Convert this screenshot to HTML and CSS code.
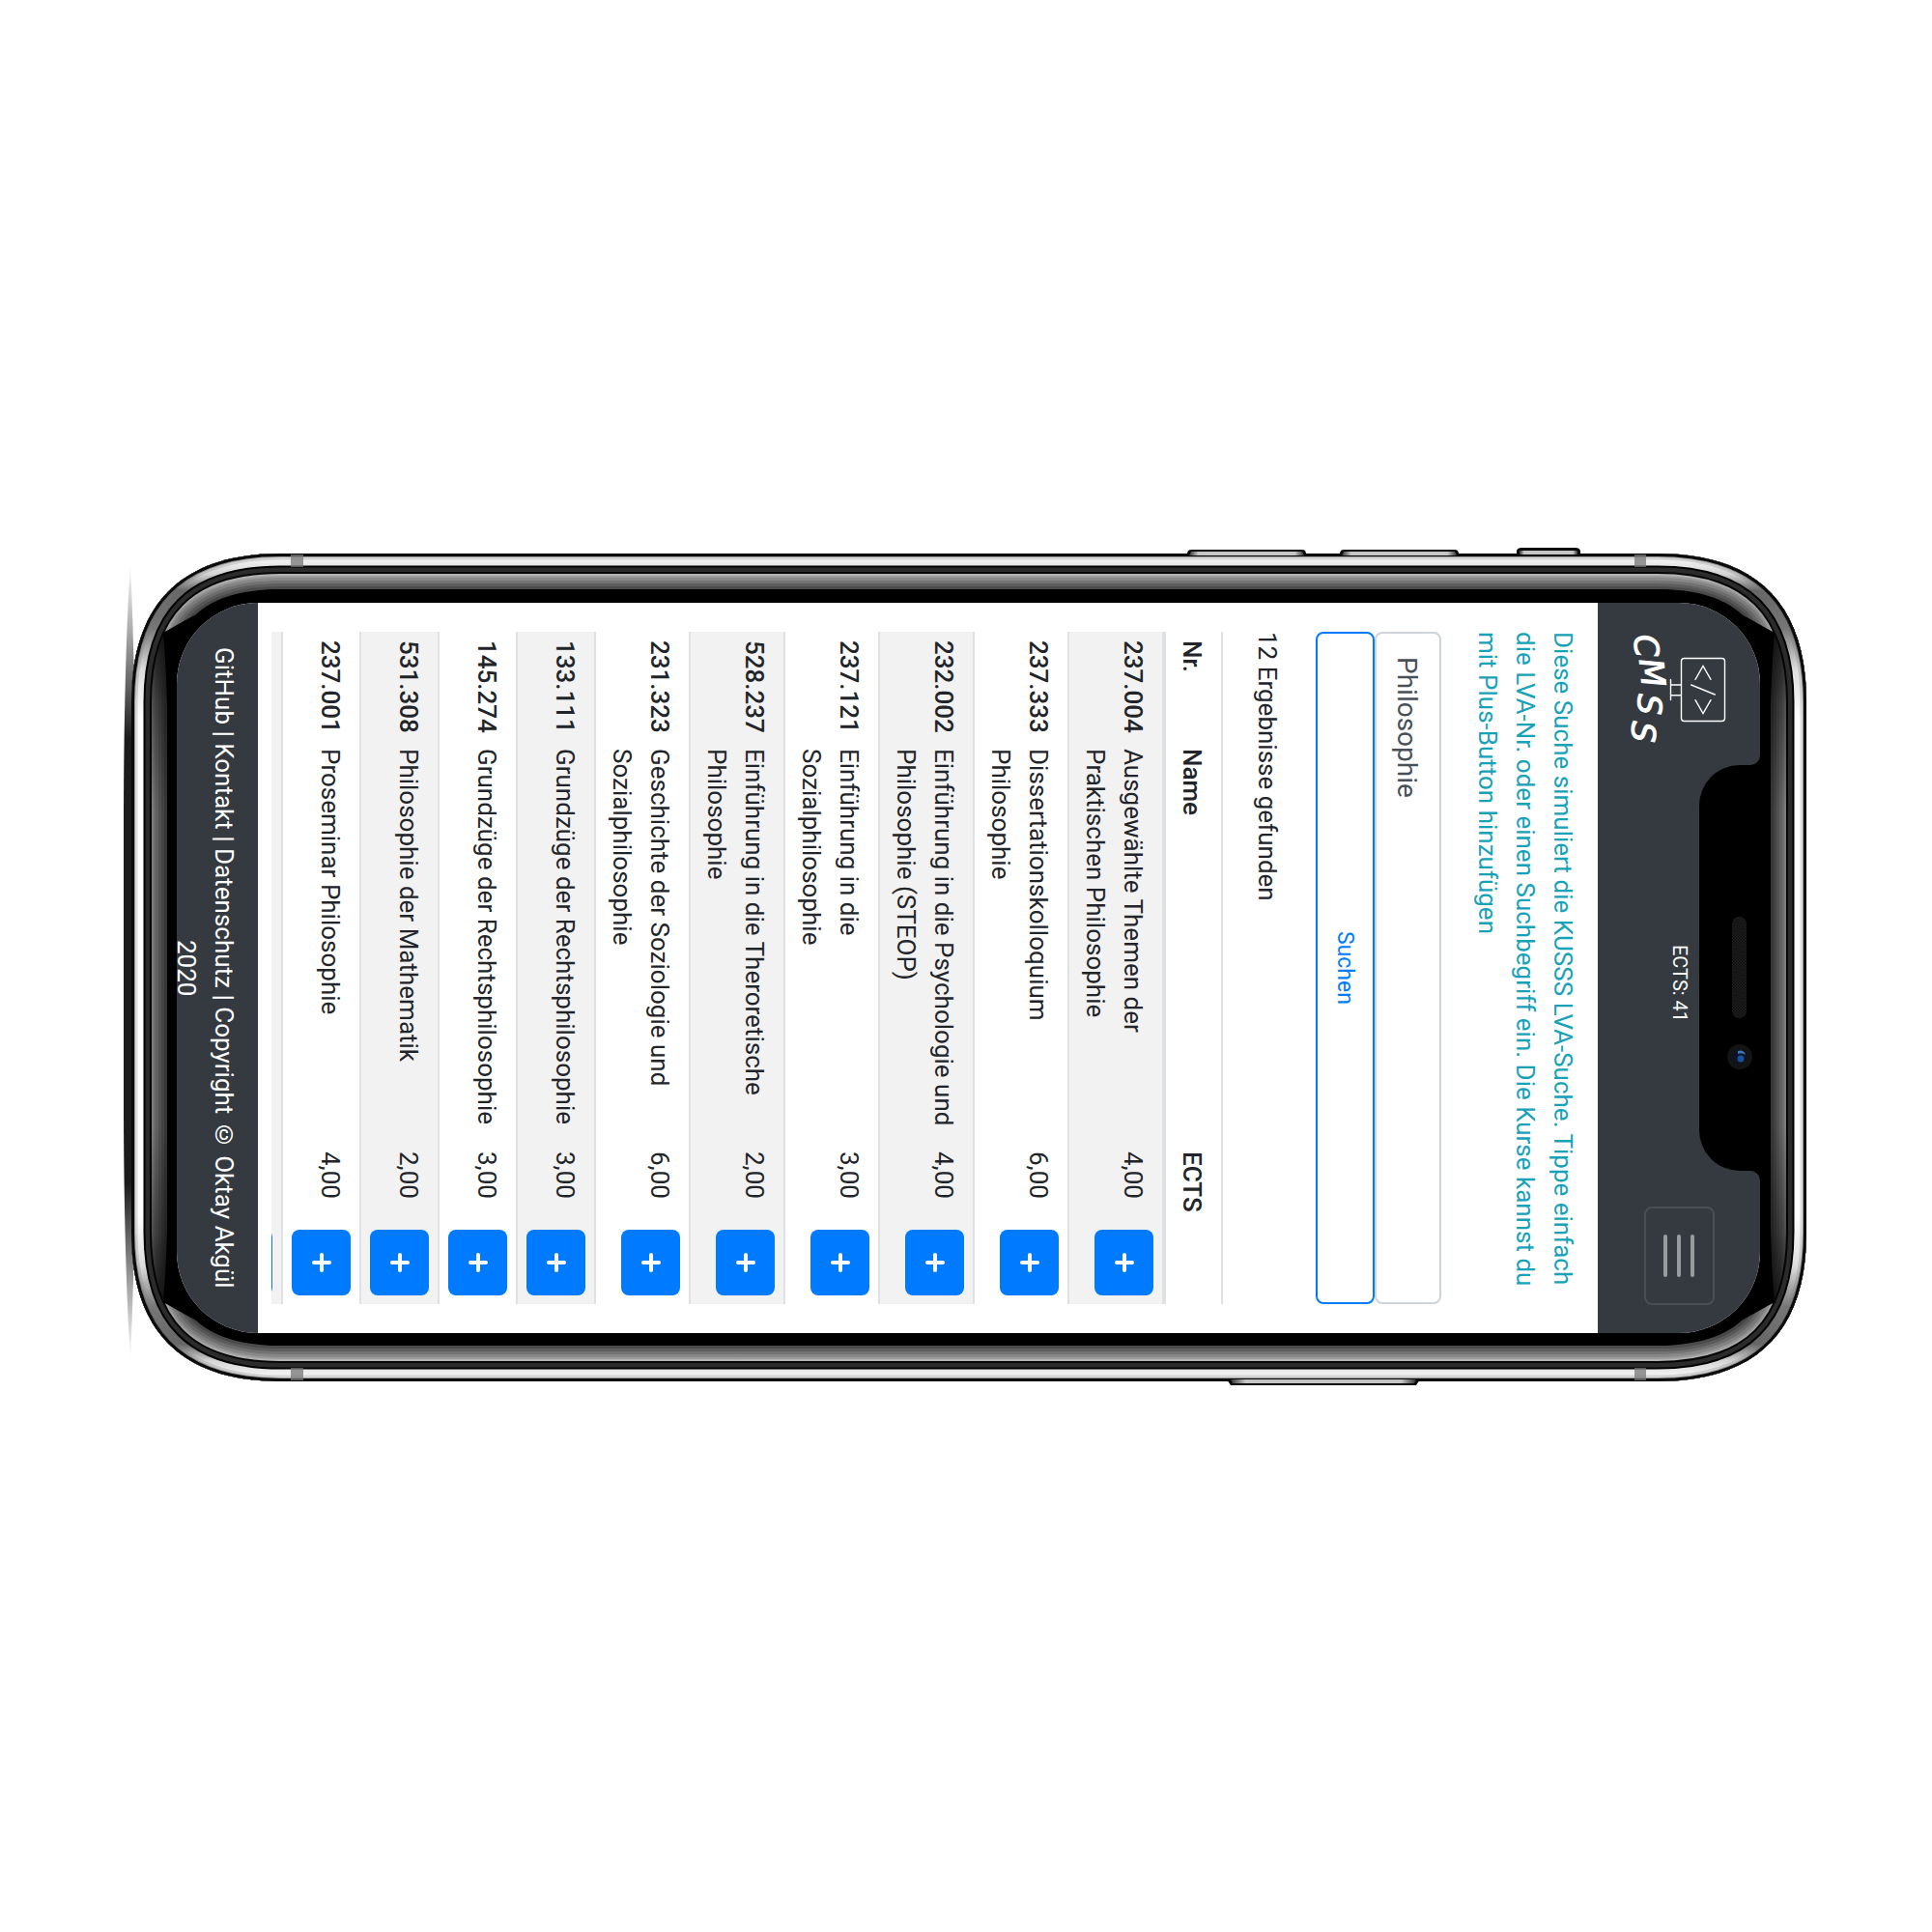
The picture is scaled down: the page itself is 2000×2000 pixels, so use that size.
FILE: index.html
```html
<!DOCTYPE html>
<html lang="de">
<head>
<meta charset="utf-8">
<meta name="viewport" content="width=device-width, initial-scale=1">
<title>CMSS – LVA-Suche</title>
<link rel="stylesheet" href="styles.css">
</head>
<body>
<div class="stage">
  <div class="device">
    <svg class="device-art" viewBox="128 566 1742 868" aria-hidden="true">
      <defs>
        <path id="body" d="M290 573H1716C1818 573 1870 625 1870 727V1276C1870 1378 1818 1430 1716 1430H290C188 1430 136 1378 136 1276V727C136 625 188 573 290 573Z"/>
        <clipPath id="bodyClip"><use href="#body"/></clipPath>
        <linearGradient id="bevel" gradientUnits="userSpaceOnUse" x1="0" y1="594" x2="0" y2="1409">
          <stop offset="0" stop-color="#c8c8c8"/>
          <stop offset=".05" stop-color="#aaa"/>
          <stop offset=".072" stop-color="#b8b8b8"/>
          <stop offset=".076" stop-color="#111"/>
          <stop offset=".16" stop-color="#555"/>
          <stop offset=".3" stop-color="#8a8a8a"/>
          <stop offset=".7" stop-color="#8a8a8a"/>
          <stop offset=".84" stop-color="#555"/>
          <stop offset=".924" stop-color="#111"/>
          <stop offset=".928" stop-color="#b8b8b8"/>
          <stop offset=".95" stop-color="#aaa"/>
          <stop offset="1" stop-color="#c8c8c8"/>
        </linearGradient>
        <linearGradient id="steel" gradientUnits="userSpaceOnUse" x1="0" y1="573" x2="0" y2="1430">
          <stop offset="0" stop-color="#fff"/>
          <stop offset=".025" stop-color="#d4d4d4"/>
          <stop offset=".045" stop-color="#666"/>
          <stop offset=".09" stop-color="#777"/>
          <stop offset=".14" stop-color="#ddd"/>
          <stop offset=".2" stop-color="#fff"/>
          <stop offset=".8" stop-color="#fff"/>
          <stop offset=".86" stop-color="#ddd"/>
          <stop offset=".91" stop-color="#777"/>
          <stop offset=".955" stop-color="#666"/>
          <stop offset=".975" stop-color="#d4d4d4"/>
          <stop offset="1" stop-color="#fff"/>
        </linearGradient>
        <linearGradient id="edge" x1="0" y1="0" x2="0" y2="1">
          <stop offset="0" stop-color="#222" stop-opacity="0"/>
          <stop offset=".1" stop-color="#222" stop-opacity=".45"/>
          <stop offset=".22" stop-color="#1c1c1c"/>
          <stop offset=".78" stop-color="#1c1c1c"/>
          <stop offset=".9" stop-color="#222" stop-opacity=".45"/>
          <stop offset="1" stop-color="#222" stop-opacity="0"/>
        </linearGradient>
        <linearGradient id="key" x1="0" y1="0" x2="1" y2="0">
          <stop offset="0" stop-color="#333"/>
          <stop offset=".08" stop-color="#c4c4c4"/>
          <stop offset=".92" stop-color="#c4c4c4"/>
          <stop offset="1" stop-color="#333"/>
        </linearGradient>
      </defs>
      <path d="M135 583C131 640 128 740 128 850V1140C128 1250 131 1350 135 1407C138 1340 140 1260 141 1140V850C140 730 138 650 135 583Z" fill="url(#edge)"/>
      <use href="#body" fill="#000"/>
      <g clip-path="url(#bodyClip)" fill="none">
        <g stroke="url(#bevel)">
          <use href="#body" stroke-width="74" stroke-opacity=".4"/>
          <use href="#body" stroke-width="68" stroke-opacity=".15"/>
          <use href="#body" stroke-width="62" stroke-opacity=".2"/>
          <use href="#body" stroke-width="56" stroke-opacity=".25"/>
          <use href="#body" stroke-width="50" stroke-opacity=".3"/>
          <use href="#body" stroke-width="46" stroke-opacity=".5"/>
        </g>
        <g fill="#000">
          <path d="M290 610C245 610 216 629 169 655Q172 690 173 730H290Z"/>
          <path d="M290 1393C245 1393 216 1374 169 1348Q172 1313 173 1273H290Z"/>
          <path d="M1716 610C1761 610 1790 629 1837 655Q1834 690 1833 730H1716Z"/>
          <path d="M1716 1393C1761 1393 1790 1374 1837 1348Q1834 1313 1833 1273H1716Z"/>
        </g>
        <use href="#body" stroke="#050505" stroke-width="42"/>
        <use href="#body" stroke="#2b2b2b" stroke-width="38"/>
        <use href="#body" stroke="#000" stroke-width="29"/>
        <use href="#body" stroke="url(#steel)" stroke-width="25"/>
        <use href="#body" stroke="#777" stroke-opacity=".25" stroke-width="13"/>
        <use href="#body" stroke="#555" stroke-opacity=".5" stroke-width="8"/>
        <use href="#body" stroke="#0a0a0a" stroke-width="6"/>
      </g>
      <g fill="#0a0a0a">
        <path d="M1228 575L1230 570Q1231 569 1234 569H1347Q1350 569 1351 570L1353 575Z"/>
        <path d="M1386 575L1388 570Q1389 569 1392 569H1505Q1508 569 1509 570L1511 575Z"/>
        <path d="M1570 575V570Q1571 567 1575 567H1631Q1635 567 1636 570V575Z"/>
        <path d="M1270 1428L1274 1434H1466L1470 1428Z"/>
      </g>
      <g fill="url(#key)">
        <path d="M1231 575L1233 571H1348L1350 575Z"/>
        <path d="M1389 575L1391 571H1506L1508 575Z"/>
        <path d="M1573 574V570H1633V574Z"/>
        <path d="M1274 1428L1276 1432H1464L1466 1428Z"/>
      </g>
      <path d="M301 574h13v13h-13zM1692 574h12v13h-12zM301 1416h13v13h-13zM1692 1416h12v13h-12z" fill="#777" fill-opacity=".75"/>
    </svg>

    <div class="screen">
      <header class="topbar">
        <a class="brand" href="#" aria-label="CMSS">
          <svg class="brand-logo" viewBox="1689 654 98 133">
            <g fill="none" stroke="#fff" stroke-width="1.4" stroke-linecap="round">
              <rect x="1740.500" y="681.500" width="45" height="65" rx="3"/>
              <path d="M1740 709H1729.500M1740 719.700H1729.500M1729.500 703.500V724.500"/>
              <path d="M1755 703.300L1763 689.500L1771 703.300M1750.700 709L1775.300 719M1755 724.700L1763 738.500L1771 724.700"/>
            </g>
            <g class="brand-name">
              <text transform="translate(1691 658) rotate(84)">C</text>
              <text transform="translate(1697 683) rotate(84)">M</text>
              <text transform="translate(1696 718) rotate(92)">S</text>
              <text transform="translate(1690 746) rotate(94)">S</text>
            </g>
          </svg>
        </a>
        <span class="credits">ECTS: 41</span>
        <button class="toggler" type="button" aria-label="Menü">
          <span class="bar"></span><span class="bar"></span><span class="bar"></span>
        </button>
      </header>

      <main class="content">
        <p class="intro">Diese Suche simuliert die KUSSS LVA-Suche. Tippe einfach die LVA-Nr. oder einen Suchbegriff ein. Die Kurse kannst du mit Plus-Button hinzufügen</p>
        <form class="search">
          <input class="search-field" type="text" aria-label="Suchbegriff" value="Philosophie">
          <button class="search-button" type="button">Suchen</button>
        </form>
        <p class="count">12 Ergebnisse gefunden</p>
        <table class="courses">
          <colgroup><col class="col-nr"><col class="col-name"><col class="col-ects"><col class="col-add"></colgroup>
          <thead>
            <tr><th scope="col">Nr.</th><th scope="col">Name</th><th scope="col">ECTS</th><th></th></tr>
          </thead>
          <tbody>
            <tr><th scope="row">237.004</th><td>Ausgewählte Themen der Praktischen Philosophie</td><td>4,00</td><td class="action"><button class="add" type="button" aria-label="Hinzufügen"><svg viewBox="0 0 22 22"><path d="M11 3v16M3 11h16"/></svg></button></td></tr>
            <tr><th scope="row">237.333</th><td>Dissertationskolloquium Philosophie</td><td>6,00</td><td class="action"><button class="add" type="button" aria-label="Hinzufügen"><svg viewBox="0 0 22 22"><path d="M11 3v16M3 11h16"/></svg></button></td></tr>
            <tr><th scope="row">232.002</th><td>Einführung in die Psychologie und Philosophie (STEOP)</td><td>4,00</td><td class="action"><button class="add" type="button" aria-label="Hinzufügen"><svg viewBox="0 0 22 22"><path d="M11 3v16M3 11h16"/></svg></button></td></tr>
            <tr><th scope="row">237.121</th><td>Einführung in die Sozialphilosophie</td><td>3,00</td><td class="action"><button class="add" type="button" aria-label="Hinzufügen"><svg viewBox="0 0 22 22"><path d="M11 3v16M3 11h16"/></svg></button></td></tr>
            <tr><th scope="row">528.237</th><td>Einführung in die Theroretische Philosophie</td><td>2,00</td><td class="action"><button class="add" type="button" aria-label="Hinzufügen"><svg viewBox="0 0 22 22"><path d="M11 3v16M3 11h16"/></svg></button></td></tr>
            <tr><th scope="row">231.323</th><td>Geschichte der Soziologie und Sozialphilosophie</td><td>6,00</td><td class="action"><button class="add" type="button" aria-label="Hinzufügen"><svg viewBox="0 0 22 22"><path d="M11 3v16M3 11h16"/></svg></button></td></tr>
            <tr><th scope="row">133.111</th><td>Grundzüge der Rechtsphilosophie</td><td>3,00</td><td class="action"><button class="add" type="button" aria-label="Hinzufügen"><svg viewBox="0 0 22 22"><path d="M11 3v16M3 11h16"/></svg></button></td></tr>
            <tr><th scope="row">145.274</th><td>Grundzüge der Rechtsphilosophie</td><td>3,00</td><td class="action"><button class="add" type="button" aria-label="Hinzufügen"><svg viewBox="0 0 22 22"><path d="M11 3v16M3 11h16"/></svg></button></td></tr>
            <tr><th scope="row">531.308</th><td>Philosophie der Mathematik</td><td>2,00</td><td class="action"><button class="add" type="button" aria-label="Hinzufügen"><svg viewBox="0 0 22 22"><path d="M11 3v16M3 11h16"/></svg></button></td></tr>
            <tr><th scope="row">237.001</th><td>Proseminar Philosophie</td><td>4,00</td><td class="action"><button class="add" type="button" aria-label="Hinzufügen"><svg viewBox="0 0 22 22"><path d="M11 3v16M3 11h16"/></svg></button></td></tr>
            <tr><th></th><td></td><td></td><td class="action"><button class="add" type="button" aria-label="Hinzufügen"></button></td></tr>
          </tbody>
        </table>
      </main>

      <footer class="footer">
        <a href="#">GitHub</a> | <a href="#">Kontakt</a> | <a href="#">Datenschutz</a> | Copyright © Oktay Akgül 2020
      </footer>
    </div>

    <svg class="device-art" viewBox="128 566 1742 868" aria-hidden="true">
      <defs>
        <pattern id="mesh" width="3" height="3" patternUnits="userSpaceOnUse">
          <rect width="3" height="3" fill="#0c0c0c"/><rect width="1.500" height="1.500" fill="#222"/><rect x="1.500" y="1.500" width="1.500" height="1.500" fill="#222"/>
        </pattern>
      </defs>
      <path d="M1826 782H1822A10 10 0 0 1 1812 792H1801A42 42 0 0 0 1759 834V1170A42 42 0 0 0 1801 1212H1812A10 10 0 0 1 1822 1222H1826Z"/>
      <rect x="1793" y="949" width="15" height="105" rx="7" fill="url(#mesh)"/>
      <circle cx="1801" cy="1094" r="13" fill="#131313"/>
      <circle cx="1801" cy="1094" r="7" fill="#07142c"/>
      <path d="M1799 1088Q1805 1086 1807 1092Q1803 1089 1799 1091Z" fill="#3a78c0"/>
      <circle cx="1802" cy="1096" r="3.500" fill="#1d4f94"/>
    </svg>
  </div>
</div>
</body>
</html>
```
FILE: styles.css
```css
*,
*::before,
*::after {
  box-sizing: border-box;
}

body {
  margin: 0;
  background: #fff;
  color: #212529;
  font-family: Roboto, "Liberation Sans", sans-serif;
  font-size: 26px;
  line-height: 39px;
}

p {
  margin: 0;
}

a {
  color: inherit;
  text-decoration: none;
}

button,
input {
  font-family: inherit;
  writing-mode: vertical-rl;
}

.stage {
  display: flex;
  align-items: center;
  min-height: 100vh;
  padding: 0 130px 0 128px;
}

.device {
  position: relative;
  display: flex;
  width: 100%;
  aspect-ratio: 871 / 434;
  padding: 58px 48px 54px 55px;
}

.device-art {
  position: absolute;
  inset: 0;
  width: 100%;
  height: 100%;
  pointer-events: none;
}

/* The phone lies on its side, so the page inside runs top to bottom, right to left. */
.screen {
  position: relative;
  display: flex;
  flex: 1;
  flex-direction: column;
  writing-mode: vertical-rl;
  min-width: 0;
  overflow: hidden;
  border-radius: 84px;
  background: #fff;
}

.topbar {
  display: flex;
  flex: none;
  align-items: center;
  justify-content: space-between;
  block-size: 168px;
  padding-inline: 30px 29px;
  background: #343a40;
  color: #fff;
}

.brand {
  display: flex;
}

.brand-logo {
  width: 98px;
  height: 133px;
  overflow: visible;
}

.brand-name {
  fill: #fff;
  stroke: #fff;
  stroke-width: 1;
  font-family: "DejaVu Sans", sans-serif;
  font-size: 34px;
  font-style: oblique;
  writing-mode: horizontal-tb;
}

.credits {
  font-size: 20px;
}

.toggler {
  display: flex;
  flex-direction: column;
  align-items: center;
  justify-content: center;
  gap: 10px;
  block-size: 73px;
  inline-size: 102px;
  padding: 0;
  border: 2px solid rgba(255, 255, 255, 0.1);
  border-radius: 8px;
  background: transparent;
}

.bar {
  block-size: 4px;
  inline-size: 44px;
  border-radius: 2px;
  background: #999c9f;
}

.content {
  flex: 1;
  min-block-size: 0;
  margin-block-end: 14px;
  padding-block-start: 17px;
  padding-inline: 30px;
  overflow: hidden;
}

.intro {
  color: #17a2b8;
}

.search {
  display: flex;
  flex-direction: column;
  margin-block: 28px 31px;
}

.search-field {
  block-size: 69px;
  padding: 0;
  padding-block-start: 3px;
  padding-inline: 24px;
  border: 2px solid #ced4da;
  border-radius: 8px;
  background: #fff;
  color: #495057;
  font-size: 28px;
}

.search-button {
  block-size: 61px;
  padding: 0;
  border: 2px solid #007bff;
  border-radius: 8px;
  background: #fff;
  color: #007bff;
  font-size: 23px;
  text-align: center;
}

.courses {
  inline-size: 100%;
  margin-block-start: 26px;
  border-collapse: separate;
  border-spacing: 0;
  table-layout: fixed;
}

.col-nr {
  inline-size: 112px;
}

.col-name {
  inline-size: 417px;
}

.col-ects {
  inline-size: 80px;
}

.col-add {
  inline-size: 87px;
}

.courses th,
.courses td {
  padding: 0;
  padding-block: 11px 7px;
  padding-inline: 9px 0;
  border-block-start: 2px solid #dee2e6;
  text-align: start;
  vertical-align: top;
}

.courses td:nth-child(2) {
  padding-inline-end: 10px;
}

.courses .action {
  padding-block: 9px;
  padding-inline-start: 10px;
}

.courses th {
  font-weight: 500;
}

.courses thead th {
  border-block-end: 4px solid #dee2e6;
}

.courses tbody tr:first-child > * {
  border-block-start-width: 0;
}

.courses tbody tr:nth-child(odd) {
  background: #f2f2f2;
}

.add {
  display: flex;
  align-items: center;
  justify-content: center;
  block-size: 61px;
  inline-size: 68px;
  padding: 0;
  border: 0;
  border-radius: 8px;
  background: #007bff;
}

.add svg {
  width: 22px;
  height: 22px;
  fill: none;
  stroke: #fff;
  stroke-linecap: round;
  stroke-width: 4;
}

.footer {
  flex: none;
  block-size: 84px;
  padding-block-start: 16px;
  padding-inline: 30px;
  background: #343a40;
  color: #fff;
  text-align: center;
}
```
